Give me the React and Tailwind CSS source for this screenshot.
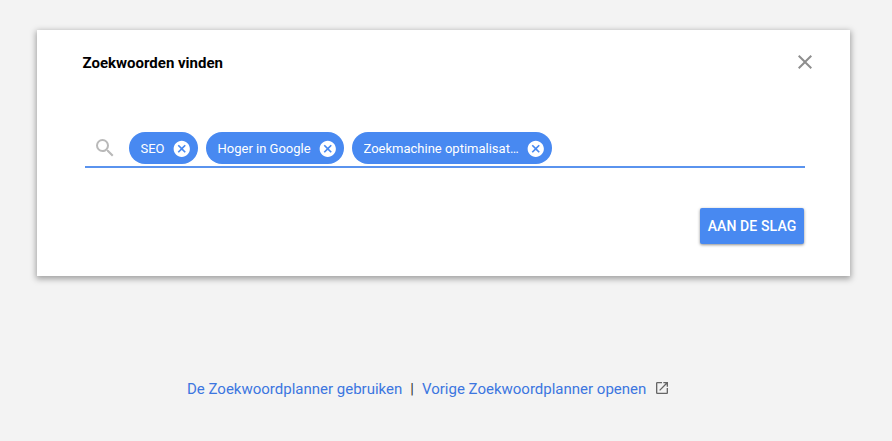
import { MdCancel, MdClose, MdOpenInNew, MdSearch } from "react-icons/md";

function Chip({ label, width }) {
  return (
    <div className={`flex h-8 items-center justify-between rounded-full bg-[#4889f1] pr-[7px] pl-[11.5px] text-white ${width}`}>
      <span className="mt-px truncate text-[13px] leading-8">{label}</span>
      <MdCancel className="mt-px size-[19.5px] shrink-0" />
    </div>
  );
}

export default function App() {
  return (
    <div className="h-[441px] w-[892px] overflow-hidden bg-[#f3f3f3] pt-[30px] pl-[37px] font-[Roboto,sans-serif]">
      <section className="h-[246px] w-[813px] bg-white pr-[46px] pl-[45.5px] shadow-[0_2px_6px_1px_rgba(0,0,0,0.34)]">
        <header className="flex h-[64px] items-center justify-between">
          <h1 className="mt-[2px] text-[15px] font-bold text-black">Zoekwoorden vinden</h1>
          <button className="-mr-[12.5px] text-[#8e8e8e]" aria-label="Sluiten">
            <MdClose className="size-6" />
          </button>
        </header>
        <div className="mt-[38px] ml-[2.5px] flex h-[36px] w-[720px] items-start border-b-2 border-[#5a93ee] pl-[7.5px]">
          <MdSearch className="mt-1 mr-[12.5px] size-6 text-[#b9b9b9]" />
          <div className="flex gap-2">
            <Chip label="SEO" width="w-[69px]" />
            <Chip label="Hoger in Google" width="w-[138px]" />
            <Chip label="Zoekmachine optimalisat…" width="w-[200px]" />
          </div>
        </div>
        <div className="mt-[40px] flex justify-end">
          <button className="h-9 w-[104px] rounded-[2px] bg-[#4889f1] text-sm font-medium tracking-[0.12px] whitespace-nowrap text-white shadow-[0_1px_3px_rgba(0,0,0,0.45)]">
            AAN DE SLAG
          </button>
        </div>
      </section>
      <footer className="mt-[101px] ml-[150px] flex h-6 items-center text-[15px] text-[#3c76e0]">
        <a>De Zoekwoordplanner gebruiken</a>
        <span className="mx-2 text-[#333]">|</span>
        <a>Vorige Zoekwoordplanner openen</a>
        <MdOpenInNew className="-mt-[2px] ml-2 size-4 text-[#666]" />
      </footer>
    </div>
  );
}
